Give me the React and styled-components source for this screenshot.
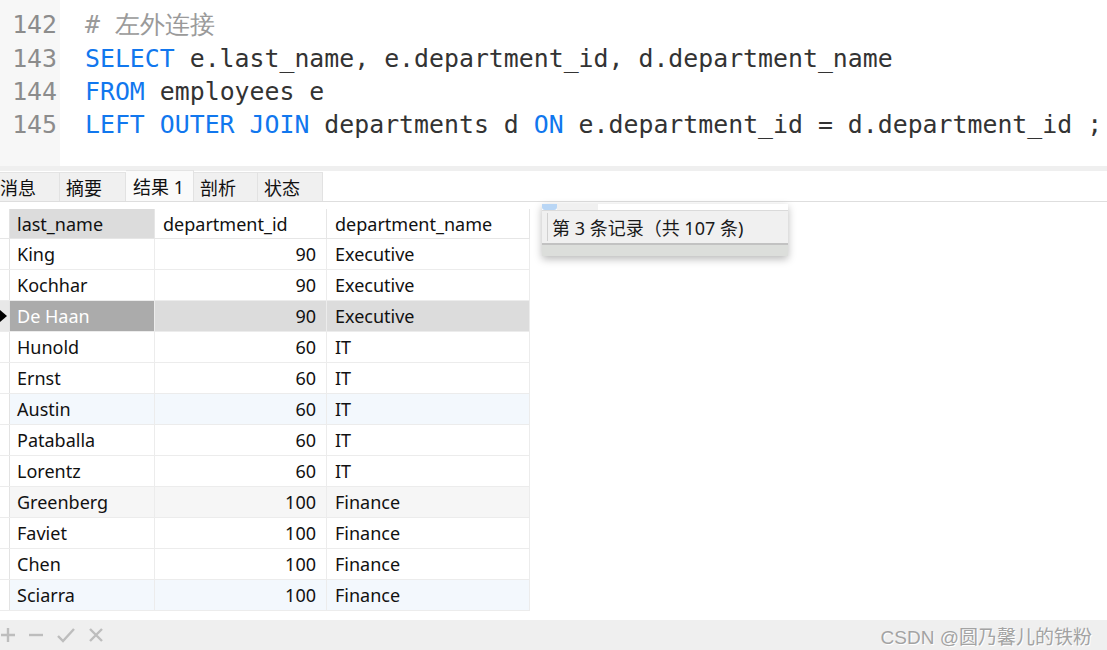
import React from "react";
import styled, { createGlobalStyle } from "styled-components";

const GlobalStyle = createGlobalStyle`
  html, body {
    margin: 0;
    padding: 0;
    background: #fff;
  }
  body {
    font-family: "Noto Sans", "Noto Sans CJK SC", sans-serif;
    overflow: hidden;
  }
`;

const codeLines = [
  { no: 141, parts: [] },
  { no: 142, parts: [{ t: "# 左外连接", k: "comment" }] },
  {
    no: 143,
    parts: [
      { t: "SELECT", k: "kw" },
      { t: " e.last_name, e.department_id, d.department_name" },
    ],
  },
  {
    no: 144,
    parts: [{ t: "FROM", k: "kw" }, { t: " employees e" }],
  },
  {
    no: 145,
    parts: [
      { t: "LEFT OUTER JOIN", k: "kw" },
      { t: " departments d " },
      { t: "ON", k: "kw" },
      { t: " e.department_id = d.department_id ;" },
    ],
  },
];

const tabs = [
  { label: "消息", width: 60 },
  { label: "摘要", width: 66 },
  { label: "结果 1", width: 68, active: true },
  { label: "剖析", width: 64 },
  { label: "状态", width: 65 },
];

const columns = [
  { name: "last_name", width: 145 },
  { name: "department_id", width: 172 },
  { name: "department_name", width: 203 },
];

const rows = [
  ["King", 90, "Executive"],
  ["Kochhar", 90, "Executive"],
  ["De Haan", 90, "Executive", "selected"],
  ["Hunold", 60, "IT"],
  ["Ernst", 60, "IT"],
  ["Austin", 60, "IT", "blue"],
  ["Pataballa", 60, "IT"],
  ["Lorentz", 60, "IT"],
  ["Greenberg", 100, "Finance", "grey"],
  ["Faviet", 100, "Finance"],
  ["Chen", 100, "Finance"],
  ["Sciarra", 100, "Finance", "blue"],
];

const rowBg = {
  selected: "#dcdcdc",
  blue: "#f3f8fd",
  grey: "#f6f6f6",
};

export default function App() {
  return (
    <Page>
      <GlobalStyle />
      <Editor>
        <Gutter>
          <Scroll>
            {codeLines.map((l) => (
              <LineNo key={l.no}>{l.no}</LineNo>
            ))}
          </Scroll>
        </Gutter>
        <Code>
          <Scroll>
            {codeLines.map((l) => (
              <CodeLine key={l.no}>
                {l.parts.map((p, i) => (
                  <Token key={i} kind={p.k}>
                    {p.t}
                  </Token>
                ))}
              </CodeLine>
            ))}
          </Scroll>
        </Code>
      </Editor>
      <Splitter />
      <TabBar>
        {tabs.map((t) => (
          <Tab key={t.label} active={t.active} width={t.width}>
            {t.label}
          </Tab>
        ))}
      </TabBar>
      <ResultArea>
        <Grid>
          <HeaderRow>
            <Indicator />
            {columns.map((c, i) => (
              <HeaderCell key={c.name} width={c.width} focused={i === 0}>
                {c.name}
              </HeaderCell>
            ))}
          </HeaderRow>
          {rows.map(([name, id, dept, kind]) => (
            <Row key={name} bg={rowBg[kind] || "#fff"}>
              <Indicator current={kind === "selected"}>
                {kind === "selected" && <Arrow />}
              </Indicator>
              <Cell width={columns[0].width} focused={kind === "selected"}>
                {name}
              </Cell>
              <Cell width={columns[1].width} align="right">
                {id}
              </Cell>
              <Cell width={columns[2].width}>{dept}</Cell>
            </Row>
          ))}
        </Grid>
        <Popup>
          <PopupTop>
            <PopupBlue />
            <PopupGrey />
          </PopupTop>
          <PopupText>第 3 条记录（共 107 条)</PopupText>
          <PopupFoot />
        </Popup>
      </ResultArea>
      <Toolbar>
        <ToolIcons>
          <ToolIcon viewBox="0 0 16 16" width="16" height="16">
            <path d="M8 1v14M1 8h14" />
          </ToolIcon>
          <ToolIcon viewBox="0 0 16 16" width="16" height="16">
            <path d="M1 8h14" />
          </ToolIcon>
          <ToolIcon viewBox="0 0 20 16" width="20" height="16">
            <path d="M2 9l5 5L18 2" />
          </ToolIcon>
          <ToolIcon viewBox="0 0 16 16" width="16" height="16">
            <path d="M2 2l12 12M14 2L2 14" />
          </ToolIcon>
        </ToolIcons>
        <Watermark>CSDN @圆乃馨儿的铁粉</Watermark>
      </Toolbar>
    </Page>
  );
}

const Page = styled.div`
  width: 1107px;
  height: 650px;
  display: flex;
  flex-direction: column;
  background: #fff;
  overflow: hidden;
`;

const Editor = styled.div`
  height: 166px;
  display: flex;
  overflow: hidden;
  font-family: "DejaVu Sans Mono", monospace;
  font-size: 24.85px;
`;

const Scroll = styled.div`
  margin-top: -25px;
`;

const Gutter = styled.div`
  width: 60px;
  background: #f7f7f7;
  text-align: right;
  color: #8c8c8c;
  padding-right: 3px;
  box-sizing: border-box;
`;

const LineNo = styled.div`
  height: 33.3px;
  line-height: 33.3px;
`;

const Code = styled.div`
  flex: 1;
  padding-left: 25px;
  white-space: pre;
  color: #333;
`;

const CodeLine = styled.div`
  height: 33.3px;
  line-height: 33.3px;
`;

const Token = styled.span`
  color: ${(p) =>
    p.kind === "kw" ? "#1177ee" : p.kind === "comment" ? "#9a9a9a" : "#333"};
`;

const Splitter = styled.div`
  height: 5px;
  background: #efefef;
`;

const TabBar = styled.div`
  height: 31px;
  display: flex;
  align-items: flex-end;
  border-bottom: 1px solid #dedede;
  box-sizing: border-box;
`;

const Tab = styled.div`
  width: ${(p) => p.width}px;
  height: ${(p) => (p.active ? "31px" : "29px")};
  padding-left: ${(p) => (p.active ? "7px" : "6px")};
  display: flex;
  align-items: center;
  background: ${(p) => (p.active ? "#fafafa" : "#f0f0f0")};
  border-right: 1px solid #e2e2e2;
  border-top: 1px solid #e4e4e4;
  box-sizing: border-box;
  font-size: 18px;
  color: #111;
  &:first-child {
    padding-left: 0;
  }
`;

const ResultArea = styled.div`
  position: relative;
  flex: 1;
  padding-top: 7px;
`;

const Grid = styled.div`
  display: flex;
  flex-direction: column;
  width: 530px;
  font-size: 18px;
  color: #111;
`;

const HeaderRow = styled.div`
  display: flex;
  height: 29px;
  border-bottom: 1px solid #e6e6e6;
`;

const Row = styled.div`
  display: flex;
  height: 31px;
  background: ${(p) => p.bg};
  border-bottom: 1px solid #ececec;
  box-sizing: border-box;
`;

const Indicator = styled.div`
  width: 10px;
  flex: none;
  background: ${(p) => (p.current ? "#e8e8e8" : "#fff")};
  border-right: 1px solid #e3e3e3;
  box-sizing: border-box;
  display: flex;
  align-items: center;
`;

const Arrow = styled.div`
  width: 0;
  height: 0;
  border-top: 6px solid transparent;
  border-bottom: 6px solid transparent;
  border-left: 7px solid #000;
`;

const HeaderCell = styled.div`
  width: ${(p) => p.width}px;
  flex: none;
  padding-left: 7px;
  box-sizing: border-box;
  display: flex;
  align-items: center;
  background: ${(p) => (p.focused ? "#dcdcdc" : "#fff")};
  border-right: 1px solid #e6e6e6;
  &:nth-child(3),
  &:nth-child(4) {
    padding-left: 8px;
  }
`;

const Cell = styled.div`
  width: ${(p) => p.width}px;
  flex: none;
  box-sizing: border-box;
  display: flex;
  align-items: center;
  justify-content: ${(p) => (p.align === "right" ? "flex-end" : "flex-start")};
  padding: 0 10px 0 ${(p) => (p.align === "right" ? "0" : "7px")};
  border-right: 1px solid #ececec;
  background: ${(p) => (p.focused ? "#ababab" : "transparent")};
  color: ${(p) => (p.focused ? "#fff" : "#111")};
  &:last-child {
    padding-left: 8px;
  }
`;

const Popup = styled.div`
  position: absolute;
  left: 542px;
  top: 2px;
  width: 246px;
  display: flex;
  flex-direction: column;
  background: #fff;
  box-shadow: 0 3px 8px rgba(0, 0, 0, 0.28);
`;

const PopupTop = styled.div`
  display: flex;
  height: 6px;
  border-bottom: 1px solid #dadada;
`;

const PopupBlue = styled.div`
  width: 15px;
  background: #b9d6f5;
  border-radius: 0 0 3px 3px;
`;

const PopupGrey = styled.div`
  width: 41px;
  background: #f0f0f0;
`;

const PopupText = styled.div`
  height: 32px;
  display: flex;
  align-items: center;
  padding-left: 10px;
  background: #f0f0f0;
  font-size: 18px;
  color: #1a1a1a;
  position: relative;
  &::before {
    content: "";
    position: absolute;
    left: 5px;
    top: 2px;
    bottom: 2px;
    width: 1px;
    background: #d0d0d0;
  }
`;

const PopupFoot = styled.div`
  height: 11px;
  background: #dcdedb;
  border-top: 2px solid #c2c2c2;
`;

const Toolbar = styled.div`
  height: 30px;
  background: #efefef;
  display: flex;
  align-items: center;
  justify-content: space-between;
  padding-right: 15px;
`;

const ToolIcons = styled.div`
  display: flex;
  align-items: center;
  gap: 12px;
`;

const ToolIcon = styled.svg`
  fill: none;
  stroke: #bdbdbd;
  stroke-width: 2.4;
`;

const Watermark = styled.div`
  font-family: "Liberation Sans", "Noto Sans CJK SC", sans-serif;
  font-size: 19px;
  color: #a3a3a3;
  text-shadow: 1px 1px 0 #fff;
`;
